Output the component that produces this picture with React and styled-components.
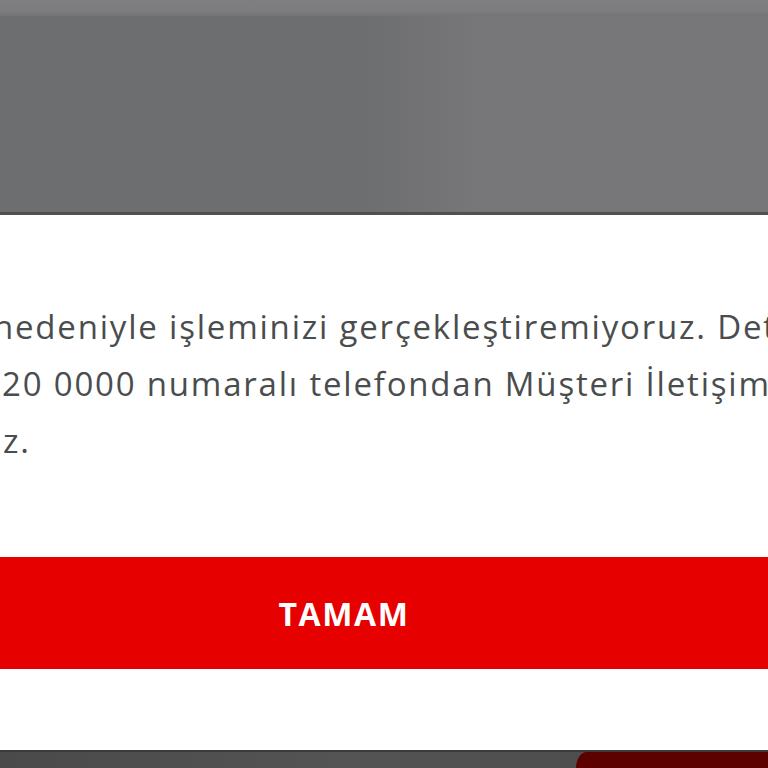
import React from "react";
import styled, { createGlobalStyle } from "styled-components";

const GlobalStyle = createGlobalStyle`
  html, body { margin: 0; padding: 0; background: #4c4c4d; overflow: hidden; }
  #root { width: 768px; height: 768px; }
`;

const Page = styled.div`
  width: 768px;
  height: 768px;
  display: flex;
  flex-direction: column;
  overflow: hidden;
  font-family: "Open Sans", "Liberation Sans", sans-serif;
`;

const TopStrip = styled.div`
  height: 16px;
  flex: none;
  background: linear-gradient(to bottom, #7f7f81 0%, #7d7d7f 70%, #747476 100%);
`;

const Backdrop = styled.div`
  height: 196px;
  flex: none;
  background: linear-gradient(
    to right,
    #6d6e70 0%,
    #6d6e70 47%,
    #747476 58%,
    #777779 62%,
    #777779 100%
  );
  border-bottom: 3px solid #4f5052;
`;

const Modal = styled.div`
  flex: none;
  height: 535px;
  background: #ffffff;
  display: flex;
  flex-direction: column;
  padding-top: 83px;
  box-sizing: border-box;
  overflow: hidden;
`;

const Message = styled.div`
  display: flex;
  flex-direction: column;
  color: #4a4d4e;
  font-size: 33px;
  letter-spacing: 1.8px;
  line-height: 57px;
`;

const Line = styled.div`
  white-space: nowrap;
  margin-left: ${(p) => p.$shift}px;
`;

const Button = styled.button`
  margin-top: 88px;
  height: 112px;
  width: 100%;
  border: none;
  background: #e60000;
  color: #ffffff;
  font-family: "Open Sans", "Liberation Sans", sans-serif;
  font-weight: 700;
  font-size: 32px;
  letter-spacing: 1.6px;
  padding: 0 80px 0 0;
  display: flex;
  align-items: center;
  justify-content: center;
`;

const Footer = styled.div`
  flex: 1;
  display: flex;
  border-top: 2px solid #3a3a3b;
  background: #4d4d4e;
`;

const FooterGray = styled.div`
  flex: 1;
  background: linear-gradient(to right, #4a4a4b 0%, #545455 60%, #4e4e4f 100%);
`;

const FooterRed = styled.div`
  width: 192px;
  background: #5c0000;
  border-top-left-radius: 40px 60px;
`;

export default function App() {
  return (
    <>
      <GlobalStyle />
      <Page>
        <TopStrip />
        <Backdrop />
        <Modal>
          <Message>
            <Line $shift={-7}>nedeniyle işleminizi gerçekleştiremiyoruz. Detaylı</Line>
            <Line $shift={2}>20 0000 numaralı telefondan Müşteri İletişim Merkezimizi</Line>
            <Line $shift={3}>z.</Line>
          </Message>
          <Button>TAMAM</Button>
        </Modal>
        <Footer>
          <FooterGray />
          <FooterRed />
        </Footer>
      </Page>
    </>
  );
}
